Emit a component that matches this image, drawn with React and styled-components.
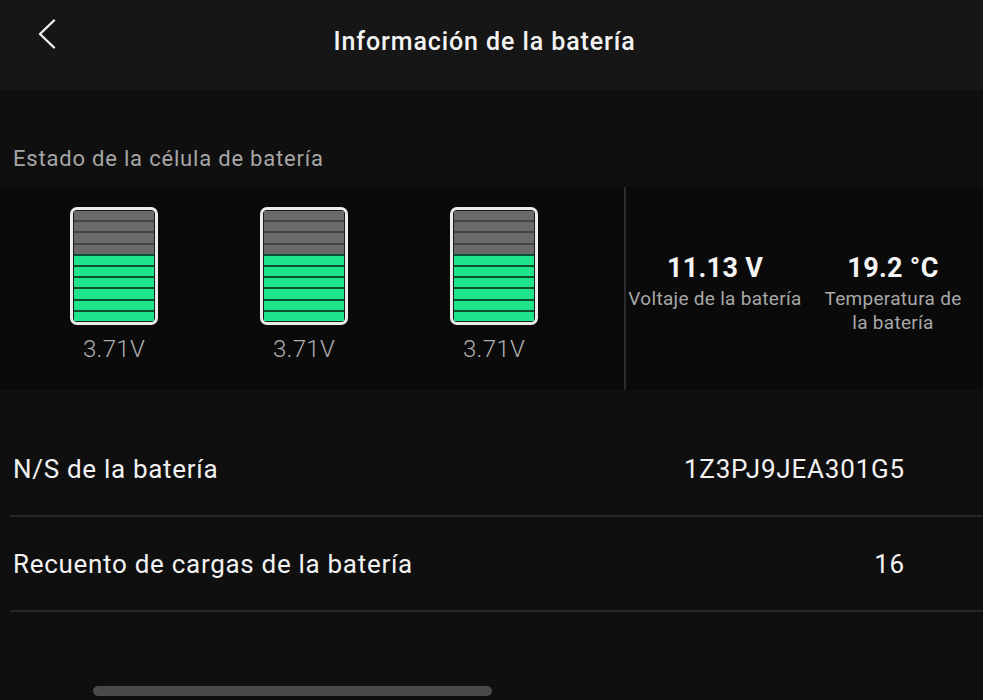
import styled, { createGlobalStyle } from "styled-components";

const GlobalStyle = createGlobalStyle`
  html, body {
    margin: 0;
    padding: 0;
    background: #0e0e0e;
  }
  body {
    font-family: Roboto, "Noto Sans", "DejaVu Sans", sans-serif;
    -webkit-font-smoothing: antialiased;
  }
`;

const Page = styled.div`
  position: relative;
  width: 983px;
  height: 700px;
  overflow: hidden;
  background: #0f0f0f;
  color: #fff;
`;

const Header = styled.header`
  display: grid;
  grid-template-columns: 80px 1fr 80px;
  align-items: center;
  height: 90px;
  background: #161616;
`;

const BackButton = styled.button`
  display: flex;
  align-items: center;
  justify-content: flex-start;
  padding: 0 0 0 37px;
  margin-top: -22px;
  height: 40px;
  background: none;
  border: 0;
  cursor: pointer;
`;

const Title = styled.h1`
  margin: -8px 0 0;
  text-align: center;
  font-size: 25px;
  font-weight: 500;
  color: #f2f2f2;
  letter-spacing: 0.9px;
  padding-right: 14px;
`;

const SectionLabel = styled.div`
  padding: 57px 0 0 13px;
  margin-bottom: 16px;
  font-size: 22px;
  letter-spacing: 0.8px;
  color: #a6a6a6;
  line-height: 24px;
`;

const CellPanel = styled.section`
  display: flex;
  height: 203px;
  background: #0a0a0a;
`;

const CellsGroup = styled.div`
  display: grid;
  grid-template-columns: repeat(3, 190px);
  padding: 20px 0 0 19px;
  width: 624px;
  box-sizing: border-box;
`;

const Cell = styled.div`
  display: flex;
  flex-direction: column;
  align-items: center;
`;

const Battery = styled.div`
  display: flex;
  flex-direction: column;
  width: 88px;
  height: 118px;
  box-sizing: border-box;
  border: 3px solid #ececec;
  border-radius: 7px;
  padding: 1px;
  background: #1a1a1a;
  overflow: hidden;
`;

const Segment = styled.div`
  flex: 1;
  background: ${({ $on }) => ($on ? "#1ee48c" : "#6a6a6a")};
  border-top: ${({ $first, $on }) =>
    $first ? "none" : `2px solid ${$on ? "#0c4f31" : "#454545"}`};
`;

const CellVoltage = styled.div`
  margin-top: 10px;
  font-size: 24px;
  line-height: 28px;
  font-weight: 300;
  letter-spacing: 0.3px;
  color: #b0b0b0;
`;

const Divider = styled.div`
  width: 2px;
  background: #2b2b2b;
`;

const Stats = styled.div`
  display: grid;
  grid-template-columns: 178px 178px;
  align-items: start;
  padding-top: 66px;
`;

const Stat = styled.div`
  display: flex;
  flex-direction: column;
  align-items: center;
  text-align: center;
`;

const StatValue = styled.div`
  font-size: 27px;
  font-weight: 700;
  color: #f5f5f5;
  line-height: 30px;
  letter-spacing: 0.3px;
`;

const StatLabel = styled.div`
  margin-top: 4px;
  font-size: 19px;
  letter-spacing: 0.3px;
  color: #a8a8a8;
  line-height: 24px;
  white-space: nowrap;
`;

const InfoList = styled.div`
  margin-top: 32px;
  background: #0f0f0f;
`;

const InfoRow = styled.div`
  display: flex;
  align-items: center;
  justify-content: space-between;
  height: 93px;
  margin-left: 10px;
  padding: 0 78px 0 3px;
  border-bottom: 2px solid #262626;
  font-size: 26px;
  letter-spacing: 0.7px;
  color: #f2f2f2;
`;

const InfoValue = styled.span`
  letter-spacing: 0.8px;
`;

const ScrollThumb = styled.div`
  position: absolute;
  left: 93px;
  bottom: 4px;
  width: 399px;
  height: 10px;
  border-radius: 5px;
  background: #4a4a4a;
`;

const cells = [
  { voltage: "3.71V", level: 6 },
  { voltage: "3.71V", level: 6 },
  { voltage: "3.71V", level: 6 },
];

const SEGMENTS = 10;

const BatteryIcon = ({ level }) => (
  <Battery>
    {Array.from({ length: SEGMENTS }).map((_, i) => (
      <Segment key={i} $first={i === 0} $on={i >= SEGMENTS - level} />
    ))}
  </Battery>
);

const rows = [
  { label: "N/S de la batería", value: "1Z3PJ9JEA301G5" },
  { label: "Recuento de cargas de la batería", value: "16" },
];

const App = () => {
  return (
    <>
      <GlobalStyle />
      <Page>
        <Header>
          <BackButton aria-label="Atrás">
            <svg width="20" height="30" viewBox="0 0 20 30" fill="none">
              <path
                d="M17 1.5L3 15l14 13.5"
                stroke="#f0f0f0"
                strokeWidth="2.4"
                strokeLinecap="round"
                strokeLinejoin="round"
              />
            </svg>
          </BackButton>
          <Title>Información de la batería</Title>
          <div />
        </Header>

        <SectionLabel>Estado de la célula de batería</SectionLabel>

        <CellPanel>
          <CellsGroup>
            {cells.map((cell, i) => (
              <Cell key={i}>
                <BatteryIcon level={cell.level} />
                <CellVoltage>{cell.voltage}</CellVoltage>
              </Cell>
            ))}
          </CellsGroup>
          <Divider />
          <Stats>
            <Stat>
              <StatValue>11.13 V</StatValue>
              <StatLabel>Voltaje de la batería</StatLabel>
            </Stat>
            <Stat>
              <StatValue>19.2 °C</StatValue>
              <StatLabel>
                Temperatura de
                <br />
                la batería
              </StatLabel>
            </Stat>
          </Stats>
        </CellPanel>

        <InfoList>
          {rows.map((row) => (
            <InfoRow key={row.label}>
              <span>{row.label}</span>
              <InfoValue>{row.value}</InfoValue>
            </InfoRow>
          ))}
        </InfoList>

        <ScrollThumb />
      </Page>
    </>
  );
};

export default App;
